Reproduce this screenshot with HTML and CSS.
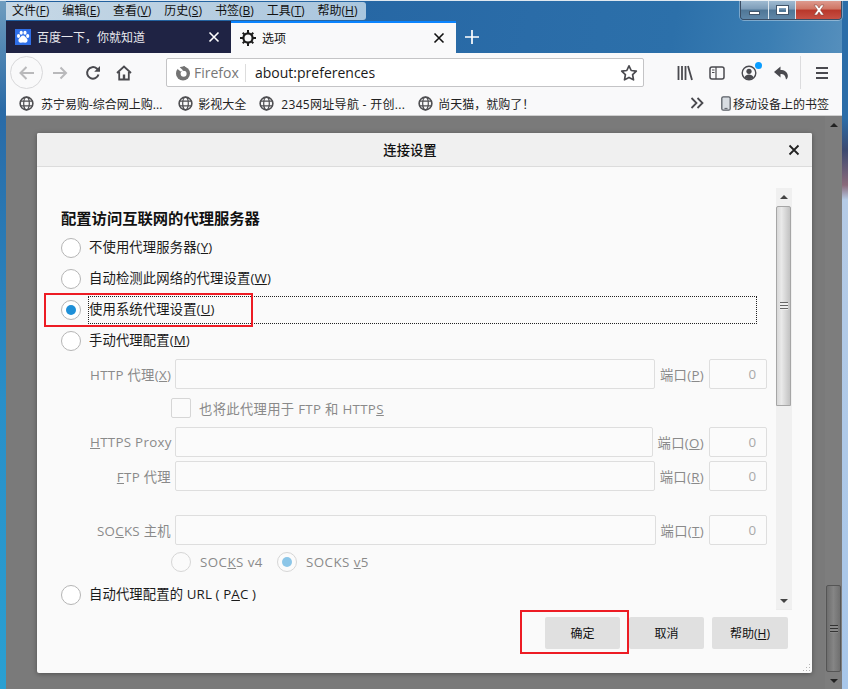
FILE: index.html
```html
<!DOCTYPE html>
<html lang="zh-CN">
<head>
<meta charset="utf-8">
<title>连接设置</title>
<link rel="stylesheet" href="styles.css">
</head>
<body>
<div class="window">
  <div class="titlebar">
    <nav class="menubar">
      <span>文件(<u>F</u>)</span><span>编辑(<u>E</u>)</span><span>查看(<u>V</u>)</span><span>历史(<u>S</u>)</span><span>书签(<u>B</u>)</span><span>工具(<u>T</u>)</span><span>帮助(<u>H</u>)</span>
    </nav>
    <div class="wincontrols">
      <div class="wc wc-min"><i class="wc-min-bar"></i></div>
      <div class="wc wc-max"><i class="wc-max-box"></i></div>
      <div class="wc wc-close">
        <svg width="16" height="12" viewBox="0 0 16 12"><path d="M3 1h3l2 3 2-3h3l-3.500 5 3.500 5h-3l-2-3-2 3H3l3.500-5z" fill="#fff" stroke="#7a3a30" stroke-width=".5"/></svg>
      </div>
    </div>
  </div>

  <div class="tabstrip">
    <div class="tab tab-bg">
      <svg class="favicon" width="16" height="16" viewBox="0 0 16 16"><rect width="16" height="16" fill="#2f6fe8"/><g fill="#fff"><ellipse cx="3.500" cy="7" rx="1.600" ry="2"/><ellipse cx="6.200" cy="3.800" rx="1.600" ry="2"/><ellipse cx="10" cy="3.800" rx="1.600" ry="2"/><ellipse cx="12.700" cy="7" rx="1.600" ry="2"/><path d="M8 6.500c-2 0-2.500 2-3.800 3-1.500 1.300-.7 4.500 1.800 4.200.9-.1 1.300-.3 2-.3s1.100.2 2 .3c2.500.3 3.300-2.900 1.800-4.200C10.500 8.500 10 6.500 8 6.500z"/></g></svg>
      <span class="tab-title">百度一下，你就知道</span>
      <svg class="tab-close" width="12" height="12" viewBox="0 0 12 12"><path d="M1.500 1.500l9 9M10.500 1.500l-9 9" stroke="#fff" stroke-width="1.600"/></svg>
    </div>
    <div class="tab tab-active">
      <svg class="favicon" width="16" height="16" viewBox="0 0 16 16"><g fill="#1c1c1c"><circle cx="8" cy="8" r="4.600" fill="none" stroke="#1c1c1c" stroke-width="2.200"/><path d="M7 0h2v3H7zM7 13h2v3H7zM0 7h3v2H0zM13 7h3v2h-3zM2 3.400L3.400 2l2.200 2.200-1.400 1.400zM10.400 11.800l1.400-1.400L14 12.600 12.600 14zM12.600 2L14 3.400l-2.200 2.200-1.400-1.400zM4.200 10.400l1.400 1.400L3.400 14 2 12.600z"/></g></svg>
      <span class="tab-title">选项</span>
      <svg class="tab-close" width="12" height="12" viewBox="0 0 12 12"><path d="M1.500 1.500l9 9M10.500 1.500l-9 9" stroke="#111" stroke-width="1.600"/></svg>
    </div>
    <svg class="newtab" width="16" height="16" viewBox="0 0 16 16"><path d="M8 1v14M1 8h14" stroke="#fff" stroke-width="1.700"/></svg>
  </div>

  <div class="toolbar">
    <div class="nav-back">
      <svg width="18" height="16" viewBox="0 0 18 16"><path d="M16 8H3M8.500 2L2.500 8l6 6" fill="none" stroke="#b9b9bb" stroke-width="2"/></svg>
    </div>
    <svg class="ico ico-fwd" width="16" height="16" viewBox="0 0 16 16"><path d="M1 8h13M8.500 2.500L14 8l-5.500 5.500" fill="none" stroke="#b9b9bb" stroke-width="2"/></svg>
    <svg class="ico ico-reload" width="16" height="16" viewBox="0 0 16 16"><path d="M13.500 9.500A5.800 5.800 0 1 1 11.800 3.600L14 5.500" fill="none" stroke="#4a4a4f" stroke-width="2"/><path d="M15 1v5.800H9.200z" fill="#4a4a4f"/></svg>
    <svg class="ico ico-home" width="16" height="16" viewBox="0 0 16 16"><path d="M1 8l7-6.500L15 8M3.200 7v7.500h9.600V7" fill="none" stroke="#4a4a4f" stroke-width="1.800"/><rect x="6.800" y="9.500" width="2.400" height="5" fill="#4a4a4f"/></svg>
    <div class="urlbar">
      <svg class="ff-logo" width="16" height="16" viewBox="0 0 16 16"><circle cx="8" cy="8.500" r="7" fill="#737373"/><circle cx="8.600" cy="8.800" r="3" fill="#fff"/><path d="M3 .5L8.200 5.400 5.600 6.600 1.500 3z" fill="#fff"/><path d="M8 1.300c1 1.200 1 2.600.2 4l2.600.4c.8-1.700.2-3.500-1.400-4.700z" fill="#737373"/></svg>
      <span class="url-id">Firefox</span>
      <span class="url-text">about:preferences</span>
      <svg class="url-star" width="18" height="18" viewBox="0 0 18 18"><path d="M9 1.800l2.200 4.700 5.100.7-3.700 3.500.9 5.100L9 13.400l-4.500 2.400.9-5.100-3.700-3.500 5.100-.7z" fill="none" stroke="#4a4a4f" stroke-width="1.700" stroke-linejoin="round"/></svg>
    </div>
    <div class="tool-right">
      <svg width="16" height="16" viewBox="0 0 16 16"><path d="M1.500 1v14M5 1v14M8.500 1v14M11 1l4 14" fill="none" stroke="#4a4a4f" stroke-width="1.800"/></svg>
      <svg width="16" height="14" viewBox="0 0 16 14"><rect x="1" y="1" width="14" height="12" rx="2" fill="none" stroke="#4a4a4f" stroke-width="1.500"/><path d="M7 1v12M3 4h2.500M3 6.500h2.500" stroke="#4a4a4f" stroke-width="1.200"/></svg>
      <div class="account">
        <svg width="16" height="16" viewBox="0 0 16 16"><circle cx="8" cy="8" r="6.800" fill="none" stroke="#4a4a4f" stroke-width="1.400"/><circle cx="8" cy="6.300" r="2.600" fill="#4a4a4f"/><path d="M3.500 12.500c.8-2 2.600-2.900 4.500-2.900s3.700.9 4.500 2.900c-1.200 1.100-2.800 1.600-4.500 1.600s-3.300-.5-4.500-1.600z" fill="#4a4a4f"/></svg>
        <i class="account-dot"></i>
      </div>
      <svg width="16" height="16" viewBox="0 0 16 16"><path d="M7.500 1.500L1 7l6.500 5.500V9c3 0 4.800 1 5.500 5.500 1.500-1 2-2.500 1.800-4C14.500 7 11.500 5 7.500 5z" fill="#4a4a4f"/></svg>
      <i class="tool-sep"></i>
      <svg width="14" height="14" viewBox="0 0 14 14"><path d="M1 2h12M1 7h12M1 12h12" stroke="#4a4a4f" stroke-width="1.800"/></svg>
    </div>
  </div>

  <div class="bookmarks">
    <a class="bm bm-1"><svg class="globe" width="15" height="15" viewBox="0 0 16 16"><use href="#globe"/></svg><span>苏宁易购-综合网上购...</span></a>
    <a class="bm bm-2"><svg class="globe" width="15" height="15" viewBox="0 0 16 16"><use href="#globe"/></svg><span>影视大全</span></a>
    <a class="bm bm-3"><svg class="globe" width="15" height="15" viewBox="0 0 16 16"><use href="#globe"/></svg><span>2345网址导航 - 开创...</span></a>
    <a class="bm bm-4"><svg class="globe" width="15" height="15" viewBox="0 0 16 16"><use href="#globe"/></svg><span>尚天猫，就购了！</span></a>
    <svg class="bm-more" width="14" height="12" viewBox="0 0 14 12"><path d="M1.500 1l5 5-5 5M7.500 1l5 5-5 5" fill="none" stroke="#4a4a4f" stroke-width="1.800"/></svg>
    <a class="bm bm-mobile"><svg width="10" height="15" viewBox="0 0 10 15"><rect x=".8" y=".8" width="8.400" height="13.400" rx="1.500" fill="#d8dde2" stroke="#5a5f66" stroke-width="1.300"/><path d="M3.500 12.400h3" stroke="#5a5f66"/></svg><span>移动设备上的书签</span></a>
  </div>

  <div class="content">
    <main class="stage">
      <section class="dialog">
        <header class="dialog-head">
          <h1>连接设置</h1>
          <svg class="dialog-x" width="12" height="12" viewBox="0 0 12 12"><path d="M1.500 1.500l9 9M10.500 1.500l-9 9" stroke="#222" stroke-width="1.800"/></svg>
        </header>
        <div class="pane-wrap">
          <div class="pane">
            <h2>配置访问互联网的代理服务器</h2>
            <div class="r-row"><i class="radio"></i><span class="r-label">不使用代理服务器(<u>Y</u>)</span></div>
            <div class="r-row"><i class="radio"></i><span class="r-label">自动检测此网络的代理设置(<u>W</u>)</span></div>
            <div class="r-row"><i class="radio radio-on"></i><span class="r-label r-focus">使用系统代理设置(<u>U</u>)</span></div>
            <div class="r-row"><i class="radio"></i><span class="r-label">手动代理配置(<u>M</u>)</span></div>

            <div class="field f-http">
              <label>HTTP 代理(<u>X</u>)</label><i class="input"></i>
              <label class="port-l">端口(<u>P</u>)</label><i class="input port">0</i>
            </div>
            <div class="sub-row s-check"><i class="check"></i><span>也将此代理用于 FTP 和 HTTP<u>S</u></span></div>
            <div class="field f-https">
              <label><u>H</u>TTPS Proxy</label><i class="input"></i>
              <label class="port-l">端口(<u>O</u>)</label><i class="input port">0</i>
            </div>
            <div class="field f-ftp">
              <label><u>F</u>TP 代理</label><i class="input"></i>
              <label class="port-l">端口(<u>R</u>)</label><i class="input port">0</i>
            </div>
            <div class="field f-socks">
              <label>SO<u>C</u>KS 主机</label><i class="input"></i>
              <label class="port-l">端口(<u>T</u>)</label><i class="input port">0</i>
            </div>
            <div class="sub-row s-ver">
              <i class="radio radio-dim"></i><span class="v4">SOC<u>K</u>S v4</span>
              <i class="radio radio-dim radio-dim-on"></i><span>SOCKS <u>v</u>5</span>
            </div>
            <div class="r-row r-pac"><i class="radio"></i><span class="r-label">自动代理配置的 URL ( P<u>A</u>C )</span></div>
          </div>
          <div class="vscroll">
            <div class="vs-btn vs-up"><i class="tri-up"></i></div>
            <div class="vs-thumb"><i class="grip"></i></div>
            <div class="vs-track"></div>
            <div class="vs-btn vs-down"><i class="tri-down"></i></div>
          </div>
        </div>
        <footer class="dialog-foot">
          <button class="btn b-ok">确定</button>
          <button class="btn b-cancel">取消</button>
          <button class="btn b-help">帮助(<u>H</u>)</button>
        </footer>
        <svg class="resize" width="9" height="9" viewBox="0 0 9 9"><path d="M7 1h1v1H7zM4 4h1v1H4zM7 4h1v1H7zM1 7h1v1H1zM4 7h1v1H4zM7 7h1v1H7z" fill="#b5b5b5"/></svg>
        <div class="mark mark-1"></div>
        <div class="mark mark-2"></div>
      </section>
    </main>
    <aside class="outer-scroll">
      <i class="tri-up tri-dark"></i>
      <div class="os-thumb"><i class="grip grip-dark"></i></div>
      <i class="tri-down tri-dark"></i>
    </aside>
  </div>
</div>
<svg class="defs" width="0" height="0"><defs><g id="globe"><circle cx="8" cy="8" r="6.800" fill="none" stroke="#4f4f52" stroke-width="1.700"/><ellipse cx="8" cy="8" rx="3" ry="6.800" fill="none" stroke="#4f4f52" stroke-width="1.300"/><path d="M1.500 5.500h13M1.500 10.500h13" stroke="#4f4f52" stroke-width="1.300"/></g></defs></svg>
</body>
</html>
```
FILE: styles.css
```css
* { box-sizing: border-box; }
html, body { margin: 0; padding: 0; height: 100%; overflow: hidden; }
body { font-family: "Open Sans", "Noto Sans CJK SC", sans-serif; font-size: 13.33px; color: #1a1a1a; text-spacing-trim: space-all; }
i { display: block; font-style: normal; }
u { text-underline-offset: 1px; }
.defs { position: absolute; }

.window {
  width: 848px; height: 689px; padding: 0 6px; display: flex; flex-direction: column;
  background:
    linear-gradient(180deg, #2b6da8 0, #2b6da8 118px, #3c4a70 150px, #8a6a7a 185px, #b5cbe6 200px, #a8c7ea 689px) right top / 6px 100% no-repeat,
    linear-gradient(180deg, #6f9dbf 0, #2a6aa6 110px, #2a8fc8 400px, #2aa0d2 689px) left top / 6px 100% no-repeat,
    linear-gradient(100deg, #1f5d9c 0, #2a6ca8 55%, #2c70aa 70%, #3b7eb3 80%, #7ea9cb 100%);
  box-shadow: inset 0 1px 0 #dfe8f0;
}

.titlebar { height: 21px; display: flex; justify-content: space-between; align-items: flex-start; flex: none; }
.menubar {
  margin-top: 2px; height: 18px; width: 360px; padding-left: 6px; display: flex; gap: 13px;
  align-items: center; font-size: 12px; line-height: 18px; color: #111; border-radius: 0 3px 3px 0;
  background: linear-gradient(90deg, #c6d8e6, #b9cfe1 50%, #a9c6de);
}
.menubar span { white-space: nowrap; }
.wincontrols { display: flex; height: 19px; margin-top: 1px; border: 1px solid #3a4d64; border-top: none; border-radius: 0 0 4px 4px; overflow: hidden; box-shadow: 0 0 0 1px rgba(255,255,255,.35); }
.wc { height: 100%; display: flex; align-items: center; justify-content: center; border-right: 1px solid #dde6ee; }
.wc-min, .wc-max { background: linear-gradient(180deg, #9fbad1 0, #7d9cb8 45%, #4f7696 50%, #5f87a8 100%); }
.wc-min { width: 28px; }
.wc-max { width: 27px; }
.wc-close { width: 45px; border-right: none; background: linear-gradient(180deg, #dd9a8e 0, #cf7463 45%, #b9372a 50%, #c75044 100%); }
.wc-min-bar { width: 11px; height: 4px; margin-top: 6px; background: #fff; border: 1px solid #42566b; }
.wc-max-box { width: 11px; height: 8px; border: 2px solid #fff; outline: 1px solid #42566b; background: transparent; }

.tabstrip { height: 32px; display: flex; align-items: stretch; flex: none; }
.tab { width: 225px; display: flex; align-items: center; padding: 0 9px; font-size: 12px; }
.tab-bg { background: #1f2344; color: #e9e9ee; }
.tab-active { background: #f9f9fa; color: #111; border-top: 2px solid #0a84ff; }
.favicon { flex: none; margin-right: 6px; }
.tab-title { flex: 1; white-space: nowrap; }
.tab-close { flex: none; margin-right: 2px; }
.newtab { margin: 8px 0 0 8px; }

.toolbar { height: 36px; flex: none; display: flex; align-items: center; background: #f9f9fa; padding-left: 4px; padding-top: 3px; }
.nav-back { width: 33px; height: 33px; border-radius: 50%; border: 1px solid #d8d8da; display: flex; align-items: center; justify-content: center; flex: none; }
.ico { flex: none; }
.ico-fwd { margin-left: 9px; }
.ico-reload { margin-left: 17px; }
.ico-home { margin-left: 15px; }
.urlbar { width: 478px; height: 29px; margin-left: 34px; flex: none; display: flex; align-items: center; background: #fff; border: 1px solid #c4c4c6; border-radius: 2px; padding: 0 5px 0 8px; }
.ff-logo { flex: none; }
.url-id { margin-left: 3px; width: 52px; height: 18px; line-height: 18px; color: #777; font-size: 14px; border-right: 1px solid #ddd; flex: none; }
.url-text { margin-left: 9px; flex: 1; font-size: 14px; color: #1a1a1a; }
.url-star { flex: none; }
.tool-right { flex: 1; display: flex; align-items: center; padding-left: 33px; gap: 16px; }
.account { position: relative; width: 16px; height: 16px; }
.account svg { display: block; }
.account-dot { position: absolute; top: -3px; right: -5px; width: 7px; height: 7px; border-radius: 50%; background: #0a9dff; }
.tool-sep { width: 1px; height: 33px; background: #dcdcde; margin: 0 -2px 0 -5px; }

.bookmarks { height: 27px; flex: none; display: flex; align-items: center; background: #f9f9fa; border-bottom: 1px solid #cfcfcf; font-size: 12px; padding-top: 2px; padding-right: 13px; color: #222; }
.bm { display: flex; align-items: center; white-space: nowrap; }
.bm span { position: relative; top: 1px; }
.bm .globe { margin-right: 5px; flex: none; }
.bm-1 { margin-left: 13px; }
.bm-1 .globe { margin-right: 7px; }
.bm-2 { margin-left: 16px; }
.bm-3 { margin-left: 13px; letter-spacing: .3px; }
.bm-3 .globe { margin-right: 7px; }
.bm-4 { margin-left: 13px; }
.bm-more { margin-left: auto; flex: none; }
.bm-mobile svg { margin-right: 2px; }
.bm-mobile { margin-left: 17px; }

.content { flex: 1; min-height: 0; display: flex; background: #7a7a7a; }
.stage { flex: 1; padding: 17px 0 0 31px; }
.outer-scroll { width: 17px; flex: none; position: relative; background: #7d7d7d; display: flex; flex-direction: column; align-items: center; padding-top: 7px; }
.os-thumb { width: 15px; height: 87px; margin-top: auto; border: 1px solid #555; border-radius: 2px; background: linear-gradient(90deg, #6e6e6e, #858585 50%, #707070); display: flex; align-items: center; justify-content: center; margin-bottom: 7px; }
.outer-scroll .tri-down { margin-bottom: 6px; }

.dialog { position: relative; width: 775px; height: 540px; background: #fafafa; border-radius: 2px; box-shadow: 0 1px 5px rgba(0,0,0,.35); display: flex; flex-direction: column; }
.dialog-head { height: 34px; flex: none; position: relative; display: flex; align-items: center; justify-content: center; padding-right: 29px; background: #f0f0f0; border-bottom: 1px solid #dcdcdc; border-radius: 2px 2px 0 0; }
.dialog-head h1 { margin: 0; font-size: 13.33px; font-weight: 500; color: #111; }
.dialog-x { position: absolute; right: 12px; top: 11px; }
.pane-wrap { height: 422px; margin-top: 21px; margin-left: 24px; display: flex; flex: none; width: 731px; }
.pane { flex: 1; padding: 21px 9px 0 0; }
.pane h2 { margin: 0; height: 23px; line-height: 19px; font-size: 15.300px; font-weight: 700; letter-spacing: 0; color: #111; }
.r-row { height: 31px; display: flex; align-items: center; gap: 8px; }
.radio { width: 20px; height: 20px; flex: none; border-radius: 50%; background: #fff; border: 1px solid #b5b5b5; position: relative; }
.radio-on::after { content: ""; position: absolute; left: 4px; top: 4px; width: 10px; height: 10px; border-radius: 50%; background: #1e90d8; }
.radio-dim { border-color: #d6d6d6; background: #fbfbfb; }
.radio-dim-on::after { content: ""; position: absolute; left: 4px; top: 4px; width: 10px; height: 10px; border-radius: 50%; background: #8cc6e8; }
.r-label { border: 1px dotted transparent; height: 28px; line-height: 25px; white-space: nowrap; letter-spacing: .12px; margin-left: -1px; }
.r-focus { flex: 1; margin-right: 10px; border-color: #222; }

.field { height: 30px; display: flex; align-items: center; padding-left: 29px; color: #8a8a8a; }
.field label { flex: none; white-space: nowrap; letter-spacing: .3px; }
.field > label:first-child { width: 81px; margin-right: 4px; text-align: right; }
.input { flex: 1; height: 30px; min-width: 0; border: 1px solid #dedede; border-radius: 2px; background: #fbfbfb; }
.input.port { flex: none; width: 58px; text-align: right; padding-right: 10px; line-height: 28px; font-size: 13.33px; color: #a9a9a9; }
.port-l { margin: 0 5px; }
.f-http { margin-top: 3px; }
.f-https { margin-top: 9px; }
.f-ftp { margin-top: 4px; }
.f-socks { margin-top: 24px; }
.sub-row { height: 20px; display: flex; align-items: center; padding-left: 110px; color: #8a8a8a; white-space: nowrap; }
.s-check { margin-top: 9px; gap: 8px; letter-spacing: .3px; }
.check { width: 20px; height: 20px; border: 1px solid #d6d6d6; border-radius: 2px; background: #fbfbfb; }
.s-ver { margin-top: 7px; letter-spacing: .45px; }
.s-ver span { margin-left: 9px; }
.s-ver .v4 { width: 63px; margin-right: 14px; }
.r-pac { margin-top: 7px; }

.vscroll { width: 16px; flex: none; display: flex; flex-direction: column; background: #f0f0f0; border: 1px solid #ececec; border-width: 0 0 1px 0; }
.vs-btn { flex: none; display: flex; justify-content: center; align-items: center; }
.vs-up { height: 18px; }
.vs-down { height: 16px; }
.vs-thumb { height: 200px; width: 15px; flex: none; border: 1px solid #a6a6a6; border-radius: 2px 2px 0 0; background: linear-gradient(90deg, #d8d8d8, #e9e9e9 35%, #c2c2c2); display: flex; align-items: center; justify-content: center; }
.vs-track { flex: 1; }
.tri-up, .tri-down { width: 0; height: 0; border-left: 4px solid transparent; border-right: 4px solid transparent; flex: none; }
.tri-up { border-bottom: 4px solid #444; }
.tri-down { border-top: 4px solid #444; }
.tri-dark.tri-up { border-bottom-color: #222; }
.tri-dark.tri-down { border-top-color: #222; }
.grip { width: 8px; height: 8px; background: repeating-linear-gradient(180deg, #666 0, #666 1px, #eee 1px, #eee 3px); }
.grip-dark { background: repeating-linear-gradient(180deg, #333 0, #333 1px, #8a8a8a 1px, #8a8a8a 3px); }

.dialog-foot { margin-top: 7px; height: 32px; flex: none; display: flex; justify-content: flex-end; padding-right: 24px; }
.btn { height: 32px; border: none; border-radius: 2px; background: #e0e0e0; font: inherit; font-size: 12px; color: #111; padding: 0; }
.b-ok { width: 75px; }
.b-cancel { width: 75px; margin-left: 9px; }
.b-help { width: 76px; margin-left: 8px; }
.resize { position: absolute; right: 1px; bottom: 1px; }
.mark { position: absolute; border: 2px solid #ed1c24; }
.mark-1 { left: 7px; top: 160px; width: 209px; height: 34px; }
.mark-2 { left: 483px; top: 477px; width: 109px; height: 44px; }
```
